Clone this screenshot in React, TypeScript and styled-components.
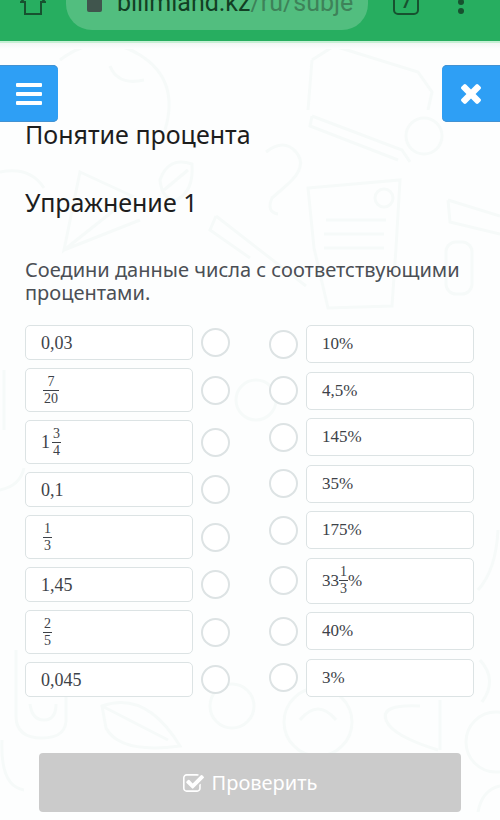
import React from "react";
import styled, { createGlobalStyle } from "styled-components";

const GlobalStyle = createGlobalStyle`
  *, *::before, *::after { box-sizing: border-box; }
  body {
    margin: 0;
    background: #fdfefe;
    font-family: "Noto Sans", "Open Sans", sans-serif;
    color: #1d1d1d;
  }
`;

const Page = styled.div`
  position: relative;
  min-height: 100vh;
  overflow: hidden;
`;

const BrowserBar = styled.header`
  position: relative;
  z-index: 1;
  display: flex;
  align-items: flex-end;
  height: 41px;
  overflow: hidden;
  background: #27ae60;
`;

const BarContent = styled.div`
  display: flex;
  flex: 1;
  min-width: 0;
  align-items: center;
  padding: 0 36px 11px 20px;
`;

const BarButton = styled.button`
  flex: none;
  display: flex;
  padding: 0;
  border: 0;
  background: none;
  color: #17512f;
`;

const AddressPill = styled.div`
  flex: 1;
  min-width: 0;
  display: flex;
  align-items: center;
  gap: 15px;
  height: 55px;
  margin: 0 25px 0 20px;
  padding: 0 12px 0 21px;
  border-radius: 26px;
  background: #52be7f;
`;

const Address = styled.span`
  flex: 1;
  min-width: 0;
  overflow: hidden;
  white-space: nowrap;
  font: 25px/32px Roboto, sans-serif;
  color: #3e8259;
`;

const Domain = styled.span`
  color: #123f24;
`;

const BarSpacer = styled.div`
  flex: none;
  width: 39px;
`;

const PageShade = styled.div`
  height: 8px;
  border-top: 2px solid #c6f0d5;
  background: linear-gradient(#f3f6f5, #fdfefe);
`;

const Doodles = styled.svg`
  position: absolute;
  top: 0;
  left: 0;
  width: 500px;
  height: 820px;
  pointer-events: none;
`;

const Content = styled.div`
  position: relative;
`;

const NavRow = styled.nav`
  display: flex;
  justify-content: space-between;
  padding-top: 16px;
`;

const NavButton = styled.button<{ $side: "left" | "right" }>`
  display: flex;
  align-items: center;
  justify-content: center;
  width: 58px;
  height: 57px;
  padding: 0;
  border: 0;
  border-radius: ${(p) => (p.$side === "left" ? "0 5px 5px 0" : "5px 0 0 5px")};
  background: #2e9ff5;
  box-shadow: inset 0 1px 0 #4292d2, inset 0 -1px 0 #4292d2;
  color: #fff;
`;

const Lesson = styled.main`
  padding: 0 26px 8px 25px;
`;

const Heading = styled.h1`
  margin: 0 0 44px;
  font-size: 25px;
  line-height: 24px;
  font-weight: 400;
`;

const Prompt = styled.p`
  margin: 0 0 21px;
  font-size: 20px;
  line-height: 23px;
  color: #4b4f55;
`;

const Match = styled.div`
  display: grid;
  grid-template-columns: 1fr 1fr;
  column-gap: 39px;
`;

const Column = styled.div`
  display: flex;
  flex-direction: column;
  justify-content: space-between;
  gap: 8px;
`;

const Row = styled.div<{ $reverse?: boolean }>`
  display: flex;
  flex-direction: ${(p) => (p.$reverse ? "row-reverse" : "row")};
  align-items: center;
  gap: 8px;
`;

const Option = styled.label<{ $height: number; $size: number }>`
  flex: 1;
  display: flex;
  align-items: center;
  height: ${(p) => p.$height}px;
  padding: 0 15px;
  border: 1px solid #dce3e4;
  border-radius: 5px;
  background: #fff;
  font-family: "Liberation Serif", serif;
  font-size: ${(p) => p.$size}px;
  line-height: 20px;
  color: #3d4248;
`;

const Dot = styled.input`
  flex: none;
  appearance: none;
  width: 29px;
  height: 29px;
  margin: 0;
  border: 2px solid #dde3e4;
  border-radius: 50%;
  background: #fff;
  &:checked {
    border-color: #2e9ff5;
  }
`;

const Fraction = styled.span<{ $tight?: boolean }>`
  display: inline-flex;
  flex-direction: column;
  text-align: center;
  margin: 0 ${(p) => (p.$tight ? 0 : 2)}px;
  font-size: 14px;
  line-height: 16px;
`;

const Over = styled.span`
  padding: 0 1px;
  border-bottom: 1px solid #3d4248;
`;

const Under = styled.span`
  padding: 0 1px;
`;

const CheckButton = styled.button`
  display: flex;
  align-items: center;
  justify-content: center;
  gap: 8px;
  width: calc(100% - 27px);
  height: 59px;
  margin: 56px 13px 0 14px;
  border: 0;
  border-radius: 4px;
  background: #cbcbcb;
  color: #fff;
  font: 20px/28px "Noto Sans", "Open Sans", sans-serif;
`;

type Item = { whole?: string; num?: string; den?: string; unit?: string };

const numbers: Item[] = [
  { whole: "0,03" },
  { num: "7", den: "20" },
  { whole: "1", num: "3", den: "4" },
  { whole: "0,1" },
  { num: "1", den: "3" },
  { whole: "1,45" },
  { num: "2", den: "5" },
  { whole: "0,045" },
];

const percents: Item[] = [
  { whole: "10%" },
  { whole: "4,5%" },
  { whole: "145%" },
  { whole: "35%" },
  { whole: "175%" },
  { whole: "33", num: "1", den: "3", unit: "%" },
  { whole: "40%" },
  { whole: "3%" },
];

function Value({ item }: { item: Item }) {
  return (
    <>
      {item.whole && <span>{item.whole}</span>}
      {item.num && (
        <Fraction $tight={Boolean(item.unit)}>
          <Over>{item.num}</Over>
          <Under>{item.den}</Under>
        </Fraction>
      )}
      {item.unit && <span>{item.unit}</span>}
    </>
  );
}

function Choices({ items, name, reverse, short, tall, size }: {
  items: Item[]; name: string; reverse?: boolean; short: number; tall: number; size: number;
}) {
  return (
    <Column>
      {items.map((item, i) => (
        <Row key={i} $reverse={reverse}>
          <Option htmlFor={`${name}-${i}`} $height={item.num ? tall : short} $size={size}>
            <Value item={item} />
          </Option>
          <Dot type="radio" name={name} id={`${name}-${i}`} />
        </Row>
      ))}
    </Column>
  );
}

function BackgroundDoodles() {
  return (
    <Doodles viewBox="0 0 500 820" fill="none" stroke="#f6faf9" strokeWidth="3" aria-hidden="true">
      <path d="M60 60Q100 30 140 55T165 130M110 66q8 20 34 14" />
      <path d="M312 60l22-14 84 26 14 20-4 18M312 60l-4 50" />
      <path d="M312 116l90 34 8 12M312 116l-2 10 88 34" />
      <circle cx="424" cy="136" r="18" />
      <path d="M266 152q18-14 30 0t-8 32l-16 14q-6 14 6 16" />
      <path d="M308 188l92-8-4 68-4 58-64 2-14-60zM326 220h60M324 234h60M324 248h60" />
      <circle cx="384" cy="198" r="9" />
      <path d="M448 200l52 16M448 200l2 22 50 12" />
      <rect x="446" y="242" width="26" height="52" rx="10" />
      <path d="M80 172l52 24-68 54zM64 250l76-30" />
      <path d="M160 180q8-24 32-16 2 28-16 36-14 0-16-20zM164 190l24-20" />
      <path d="M216 216l-6 14 40 28M216 216l90 70" />
      <path d="M0 172q30-6 44 16" />
      <path d="M4 370v60M0 490q20-4 24-22" />
      <circle cx="256" cy="400" r="20" />
      <path d="M478 590q18-20 20-60M480 660q18 20 2 42" />
      <path d="M16 650v66q0 22 26 22t24-22v-20M30 704q2 16 14 16t12-16" />
      <path d="M102 706q44-16 78 40-60 8-74-18zM102 706l66 34" />
      <circle cx="232" cy="706" r="22" />
      <circle cx="318" cy="722" r="34" />
      <path d="M300 720q18-22 36 0M420 706q-40-2-34 14t52 30M440 700v50" />
      <circle cx="496" cy="742" r="30" />
      <path d="M2 740q-2 46 22 50M478 812q4-22 22-26" />
    </Doodles>
  );
}

export default function App() {
  return (
    <>
      <GlobalStyle />
      <Page>
        <BrowserBar>
          <BarContent>
            <BarButton aria-label="Home">
              <svg width="26" height="26" viewBox="0 0 26 26" fill="none" stroke="currentColor" strokeWidth="2">
                <path d="M1 12L13 0l12 12h-4v12H5V12z" />
              </svg>
            </BarButton>
            <AddressPill>
              <svg width="15" height="22" viewBox="0 0 15 22" fill="#40554d">
                <rect x="0" y="6" width="15" height="14" rx="2" />
                <path d="M3 8V5a4 4 0 0 1 9 0v3" fill="none" stroke="#40554d" strokeWidth="2" />
              </svg>
              <Address>
                <Domain>bilimland.kz</Domain>/ru/subje
              </Address>
            </AddressPill>
            <BarButton aria-label="Tabs">
              <svg width="26" height="26" viewBox="0 0 26 26">
                <rect x="1" y="0" width="24" height="24" rx="4" fill="none" stroke="currentColor" strokeWidth="2" />
                <text x="13" y="18" textAnchor="middle" fontFamily="Roboto, sans-serif" fontSize="16" fontWeight="700" fill="currentColor">7</text>
              </svg>
            </BarButton>
            <BarSpacer />
            <BarButton aria-label="Menu">
              <svg width="6" height="26" viewBox="0 0 6 26" fill="currentColor">
                <circle cx="3" cy="4" r="3" />
                <circle cx="3" cy="12" r="3" />
                <circle cx="3" cy="21" r="3" />
              </svg>
            </BarButton>
          </BarContent>
        </BrowserBar>
        <BackgroundDoodles />
        <Content>
          <PageShade />
          <NavRow>
            <NavButton $side="left" aria-label="Меню">
              <svg width="26" height="22" viewBox="0 0 26 22" fill="currentColor">
                <rect width="26" height="4" y="0" rx="1" />
                <rect width="26" height="4" y="9" rx="1" />
                <rect width="26" height="4" y="18" rx="1" />
              </svg>
            </NavButton>
            <NavButton $side="right" aria-label="Закрыть">
              <svg width="20" height="20" viewBox="302 366 1188 1188" fill="currentColor">
                <path d="M1490 1322q0 40-28 68l-136 136q-28 28-68 28t-68-28l-294-294-294 294q-28 28-68 28t-68-28l-136-136q-28-28-28-68t28-68l294-294-294-294q-28-28-28-68t28-68l136-136q28-28 68-28t68 28l294 294 294-294q28-28 68-28t68 28l136 136q28 28 28 68t-28 68l-294 294 294 294q28 28 28 68z" />
              </svg>
            </NavButton>
          </NavRow>
          <Lesson>
            <Heading>Понятие процента</Heading>
            <Heading as="h2">Упражнение 1</Heading>
            <Prompt>Соедини данные числа с соответствующими процентами.</Prompt>
            <Match>
              <Choices items={numbers} name="number" short={35} tall={44} size={18} />
              <Choices items={percents} name="percent" reverse short={38} tall={46} size={17} />
            </Match>
            <CheckButton>
              <svg width="21" height="18" viewBox="64 128 1664 1408" fill="currentColor">
                <path d="M1472 930v318q0 119-84.5 203.5t-203.5 84.5h-832q-119 0-203.5-84.5t-84.5-203.5v-832q0-119 84.5-203.5t203.5-84.5h832q63 0 117 25 15 7 18 23 3 17-9 29l-49 49q-10 10-23 10-3 0-9-2-23-6-45-6h-832q-66 0-113 47t-47 113v832q0 66 47 113t113 47h832q66 0 113-47t47-113v-254q0-13 9-22l64-64q10-10 23-10 6 0 12 3 20 8 20 29zm231-489l-814 814q-24 24-57 24t-57-24l-430-430q-24-24-24-57t24-57l110-110q24-24 57-24t57 24l263 263 647-647q24-24 57-24t57 24l110 110q24 24 24 57t-24 57z" />
              </svg>
              Проверить
            </CheckButton>
          </Lesson>
        </Content>
      </Page>
    </>
  );
}
